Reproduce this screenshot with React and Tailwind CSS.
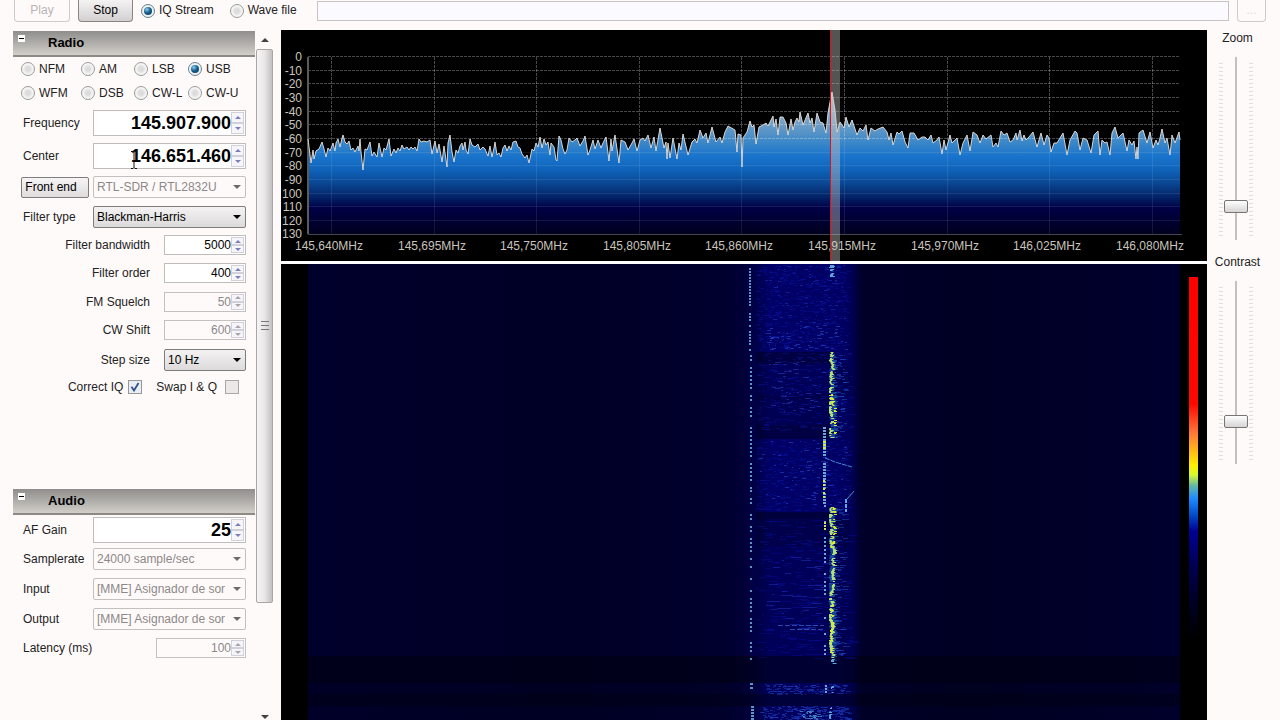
import React from "react";

/* ---------- small controls ---------- */

function Radio({ name, label, checked }) {
  return (
    <label className="flex items-center gap-1 whitespace-nowrap">
      <span className="grid size-[14px] shrink-0 place-items-center">
        <input
          type="radio"
          name={name}
          defaultChecked={checked}
          className="peer col-start-1 row-start-1 size-[14px] appearance-none rounded-full border border-[#9a9a9a] bg-[radial-gradient(circle,#dcdcdc_25%,#f6f6f6_60%)] checked:border-[#6d7f8c] checked:bg-none checked:bg-[#eef3f6]"
        />
        <span className="pointer-events-none col-start-1 row-start-1 hidden size-2 rounded-full bg-[radial-gradient(circle_at_35%_30%,#8fd0ee,#17608f_45%,#0a2f50)] peer-checked:block" />
      </span>
      {label}
    </label>
  );
}

function Triangle({ up, className }) {
  return (
    <svg viewBox="0 0 8 4" className={className} aria-hidden="true">
      <path d={up ? "M4 0 8 4H0z" : "M0 0h8L4 4z"} fill="currentColor" />
    </svg>
  );
}

function NumberField({ id, value, disabled, big }) {
  return (
    <div
      className={
        "flex items-center border p-px " +
        (big ? "h-[26px] w-[153px] bg-white" : "h-5 w-full") +
        (disabled ? " border-[#c4c0c0] text-[#8c8888]" : " border-[#c0bcbc] bg-white text-black")
      }
    >
      <input
        id={id}
        type="text"
        defaultValue={value}
        disabled={disabled}
        className={"min-w-0 flex-1 bg-transparent text-right " + (big ? "text-lg font-bold leading-6" : "text-xs leading-4")}
      />
      <div className={"flex h-full w-[13px] shrink-0 flex-col " + (disabled ? "text-[#a9a4a8]" : "text-[#7a7fba]")}>
        <button type="button" aria-label="Increase" disabled={disabled} className="flex flex-1 items-center justify-center border border-[#d2d0da] bg-[#f6f5fa]">
          <Triangle up className="h-[3px] w-[6px]" />
        </button>
        <button type="button" aria-label="Decrease" disabled={disabled} className="flex flex-1 items-center justify-center border border-[#d2d0da] bg-[#f6f5fa]">
          <Triangle className="h-[3px] w-[6px]" />
        </button>
      </div>
    </div>
  );
}

function Select({ id, value, disabled }) {
  return (
    <div className="relative w-full">
      <select
        id={id}
        disabled={disabled}
        className={
          "block h-[22px] w-full appearance-none overflow-hidden text-clip whitespace-nowrap rounded-xs border pl-[3px] pr-5 text-xs opacity-100 " +
          (disabled
            ? "border-[#c4c0c0] bg-transparent text-[#8c8888]"
            : "border-[#7e7c7c] bg-linear-to-b from-[#f4f2f2] to-[#dcdada] text-black")
        }
      >
        <option>{value}</option>
      </select>
      <Triangle className={"pointer-events-none absolute right-[5px] top-[9px] h-1 w-2 " + (disabled ? "text-[#6e6a6a]" : "text-black")} />
    </div>
  );
}

function Row({ id, label, children, className = "h-[29px]" }) {
  return (
    <div className={"flex items-center justify-between pl-[10px] " + className}>
      <label htmlFor={id} className="whitespace-nowrap">{label}</label>
      <div className="w-[153px]">{children}</div>
    </div>
  );
}

function NarrowRow({ id, label, children, className = "h-[29px]" }) {
  return (
    <div className={"flex items-center justify-end gap-[14px] " + className}>
      <label htmlFor={id} className="whitespace-nowrap">{label}</label>
      <div className="w-[82px]">{children}</div>
    </div>
  );
}

function SectionHeader({ title }) {
  return (
    <h2 className="flex h-[26px] items-start border-b-2 border-[#8d8a86] bg-linear-to-b from-[#8f8e8c] to-[#d2cfc9] text-[13px] font-bold leading-6 text-black">
      <button type="button" aria-label={"Collapse " + title} className="ml-[5px] mt-1 mr-[23px] flex size-[7px] items-center justify-center bg-white">
        <span className="h-px w-[5px] bg-black" />
      </button>
      {title}
    </h2>
  );
}

function Slider({ id, label, value }) {
  const ticks = "mt-[6px] h-[174px] w-1 bg-[repeating-linear-gradient(to_bottom,#e2dede_0_1px,transparent_1px_4px)]";
  return (
    <div className="flex flex-col items-center">
      <label htmlFor={id} className="leading-4">{label}</label>
      <div className="mt-[11px] flex justify-center gap-px pr-1">
        <span className={ticks} />
        <input
          id={id}
          type="range"
          defaultValue={value}
          className="h-[183px] w-6 appearance-none bg-[linear-gradient(#c4c0c0,#c4c0c0)] bg-[length:2px_100%] bg-center bg-no-repeat [direction:rtl] [writing-mode:vertical-lr] [&::-webkit-slider-thumb]:h-[13px] [&::-webkit-slider-thumb]:w-6 [&::-webkit-slider-thumb]:appearance-none [&::-webkit-slider-thumb]:rounded-xs [&::-webkit-slider-thumb]:border [&::-webkit-slider-thumb]:border-[#777474] [&::-webkit-slider-thumb]:bg-linear-to-b [&::-webkit-slider-thumb]:from-white [&::-webkit-slider-thumb]:to-[#d6d4d4]"
        />
        <span className={ticks} />
      </div>
    </div>
  );
}

/* ---------- spectrum ---------- */

const TRACE =
  "308,139 311,163 313,150 314,159 316,151 319,149 322,142 324,149 326,157 328,148 330,151 333,143 335,151 336,143 338,139 340,147 342,138 343,135 345,142 347,144 349,141 351,150 353,148 355,152 358,146 359,151 360,139 361,152 363,170 365,149 367,150 370,142 372,156 374,152 377,157 379,143 382,157 384,148 386,150 389,139 391,156 394,149 396,153 398,148 400,151 402,145 404,149 407,147 409,150 411,147 413,149 415,147 417,151 419,139 421,142 424,141 427,142 430,140 432,154 435,141 437,153 439,144 442,162 444,146 447,167 448,143 450,135 452,152 454,162 456,150 458,153 460,146 462,143 463,150 465,142 466,150 468,154 470,139 472,145 475,147 478,144 480,150 483,147 485,149 488,156 490,146 492,157 494,148 495,142 497,155 499,153 501,157 503,148 505,145 507,151 509,146 511,150 513,142 516,141 518,147 520,148 522,154 525,158 527,155 529,163 532,149 534,151 536,143 538,147 540,137 542,148 544,139 546,145 548,142 550,155 551,143 554,147 556,160 557,161 559,136 561,140 563,149 565,154 567,150 569,138 572,142 575,140 577,138 580,146 583,141 585,136 588,155 590,150 593,140 595,149 598,140 601,148 603,143 606,137 609,161 611,139 612,151 615,135 619,163 621,140 625,142 628,150 632,143 634,139 637,151 640,140 643,138 645,141 648,135 651,148 654,137 656,151 660,128 664,148 666,142 667,159 668,143 670,158 673,138 677,159 679,143 681,150 683,134 688,155 692,142 695,139 697,143 700,130 703,138 706,133 708,143 712,127 716,142 720,137 722,143 725,132 728,126 735,130 737,152 738,134 741,135 742,167 743,138 747,132 750,121 752,127 754,125 756,144 759,127 763,125 766,123 768,126 773,116 774,127 776,119 778,135 780,117 783,117 786,123 788,135 791,119 793,130 795,122 797,118 799,122 800,112 803,125 808,113 810,123 812,118 814,132 817,113 820,122 823,123 826,133 828,113 830,102 832,92 835,110 837,132 840,122 842,125 844,128 846,117 849,127 852,120 857,135 860,128 863,131 866,125 868,140 871,128 875,131 878,129 883,127 887,132 889,140 891,133 893,145 897,132 899,134 902,131 905,142 908,148 910,133 914,133 918,140 922,137 925,137 928,140 931,135 933,143 937,140 939,137 942,154 944,140 946,150 950,135 952,143 957,138 960,155 963,143 967,135 970,151 973,132 977,135 980,143 983,135 986,139 991,135 993,147 996,143 998,147 1001,131 1004,135 1007,133 1010,142 1013,140 1016,133 1017,140 1020,130 1022,141 1024,135 1026,140 1029,137 1033,132 1037,147 1041,133 1044,145 1047,135 1049,138 1051,152 1054,143 1057,143 1060,138 1063,133 1067,155 1070,140 1075,131 1077,133 1080,150 1083,138 1087,140 1091,153 1094,135 1098,131 1100,155 1102,140 1105,143 1107,142 1110,155 1112,133 1115,127 1118,138 1123,133 1127,151 1129,140 1132,145 1134,141 1136,159 1137,147 1138,159 1139,133 1143,130 1147,143 1150,132 1153,148 1156,140 1158,145 1160,138 1162,129 1165,143 1167,138 1170,155 1172,135 1175,143 1179,132 1180,140";

const LEVELS = ["0", "-10", "-20", "-30", "-40", "-50", "-60", "-70", "-80", "-90", "100", "110", "120", "130"];
const FREQS = ["145,640", "145,695", "145,750", "145,805", "145,860", "145,915", "145,970", "146,025", "146,080"];
const levelY = (i) => 56 + Math.round(i * 13.65);
const freqX = (i) => 331 + Math.round(i * 102.6);

function Spectrum() {
  return (
    <svg viewBox="281 30 926 231" className="block h-auto w-full bg-black" role="img" aria-label="Spectrum">
      <defs>
        <linearGradient id="level" gradientUnits="userSpaceOnUse" x1="0" y1="90" x2="0" y2="234">
          <stop offset="0" stopColor="#b4bcc6" />
          <stop offset="0.22" stopColor="#74a0c6" />
          <stop offset="0.36" stopColor="#3c88c8" />
          <stop offset="0.46" stopColor="#1a74cc" />
          <stop offset="0.56" stopColor="#0e62b8" />
          <stop offset="0.65" stopColor="#0a4692" />
          <stop offset="0.74" stopColor="#032468" />
          <stop offset="0.82" stopColor="#000046" />
          <stop offset="1" stopColor="#00001e" />
        </linearGradient>
      </defs>
      <polygon points={"308,234 " + TRACE + " 1180,234"} fill="url(#level)" />
      <g stroke="#fff" strokeOpacity="0.28" strokeDasharray="3 1" shapeRendering="crispEdges">
        {LEVELS.slice(0, 7).map((l, i) => (
          <path key={l} d={`M308 ${levelY(i)}.5H1180`} />
        ))}
        {FREQS.map((f, i) => (
          <path key={f} d={`M${freqX(i)}.5 57V140`} />
        ))}
      </g>
      <g stroke="#fff" strokeOpacity="0.09" shapeRendering="crispEdges">
        {LEVELS.slice(7, 13).map((l, i) => (
          <path key={l} d={`M308 ${levelY(i + 7)}.5H1180`} />
        ))}
        {FREQS.map((f, i) => (
          <path key={f} d={`M${freqX(i)}.5 140V234`} />
        ))}
      </g>
      <path d="M308 57V234" stroke="#5a5a5a" strokeWidth="2" />
      <path d="M308 234.500H1182" stroke="#454550" />
      <polyline points={TRACE} fill="none" stroke="#e4e0dc" strokeOpacity="0.92" strokeWidth="1" />
      <g fontFamily="Liberation Sans, Arial, sans-serif" fontSize="12" fill="#c8c4bc">
        {LEVELS.map((l, i) => (
          <text key={l} x="302" y={levelY(i) + 5} textAnchor="end">{l}</text>
        ))}
        {FREQS.map((f, i) => (
          <text key={f} x={freqX(i) - 2} y="250" textAnchor="middle">{f + "MHz"}</text>
        ))}
      </g>
      <rect x="831" y="30" width="9" height="231" fill="#c8c8c8" fillOpacity="0.42" />
      <rect x="830" y="30" width="1" height="231" fill="#e01414" />
    </svg>
  );
}

/* ---------- waterfall ---------- */

function makeRandom(seed) {
  let s = seed;
  return () => {
    s = (s * 1664525 + 1013904223) % 4294967296;
    return s / 4294967296;
  };
}

const rnd = makeRandom(1459079);

function marks(count, x0, x1, y0, y1, maxLen) {
  let d = "";
  for (let i = 0; i < count; i++) {
    const x = Math.round(x0 + rnd() * (x1 - x0));
    const y = Math.round(y0 + rnd() * (y1 - y0));
    d += `M${x} ${y}.5h${1 + Math.round(rnd() * maxLen)}`;
  }
  return d;
}

/* vertical carrier: short strokes around x, kept with the given probability */
function carrier(x, y0, y1, keep, jitter, minLen, maxLen) {
  let d = "";
  let drift = 0;
  for (let y = y0; y < y1; y++) {
    drift = Math.max(-jitter, Math.min(jitter, drift + (rnd() - 0.5) * 2));
    if (rnd() < keep) d += `M${(x + drift).toFixed(1)} ${y}.5h${minLen + Math.round(rnd() * (maxLen - minLen))}`;
  }
  return d;
}

function dashes(x, y0, y1, every, keep, width) {
  let d = "";
  for (let y = y0; y < y1; y += every) {
    if (rnd() < keep) d += `M${x} ${y}h${width}v2h-${width}z`;
  }
  return d;
}

const NOISE = [
  { d: marks(650, 756, 848, 265, 350, 4), color: "#0a14a0", opacity: 0.4 },
  { d: marks(300, 756, 850, 352, 430, 6), color: "#0a14a0", opacity: 0.4 },
  { d: marks(420, 756, 850, 440, 510, 4), color: "#0a14a8", opacity: 0.4 },
  { d: marks(300, 756, 850, 520, 658, 10), color: "#0810a0", opacity: 0.4 },
  { d: marks(60, 765, 846, 325, 350, 4), color: "#2848c8", opacity: 0.6 },
  { d: marks(60, 765, 846, 265, 325, 3), color: "#2038c0", opacity: 0.5 },
  { d: marks(50, 768, 822, 360, 412, 5), color: "#2c40c0", opacity: 0.55 },
  { d: marks(70, 758, 846, 440, 505, 4), color: "#2444c8", opacity: 0.6 },
  { d: marks(36, 765, 826, 555, 630, 14), color: "#1c30b8", opacity: 0.55 },
  { d: marks(150, 765, 846, 684, 694, 4), color: "#1c38b8", opacity: 0.55 },
  { d: marks(190, 760, 848, 706, 719, 4), color: "#1c40c0", opacity: 0.55 },
  { d: marks(35, 800, 818, 710, 719, 3), color: "#50a0e0", opacity: 0.6 },
  { d: marks(70, 830, 844, 352, 440, 5), color: "#2050b8", opacity: 0.55 },
  { d: marks(130, 828, 844, 507, 660, 6), color: "#2050b8", opacity: 0.5 },
];

const GLOW = carrier(830, 352, 438, 0.8, 1, 4, 8) + carrier(830, 507, 658, 0.8, 1, 4, 8);
const SIGNAL = carrier(831, 352, 438, 0.8, 2, 2, 4) + carrier(831, 507, 658, 0.84, 2, 2, 4);
const HOT = carrier(832, 394, 438, 0.4, 2, 2, 3) + carrier(832, 507, 550, 0.3, 2, 2, 3) + carrier(832, 602, 655, 0.4, 2, 2, 3);
const SIGNAL_ENDS = carrier(831, 264, 277, 0.8, 2, 2, 5) + carrier(832, 658, 664, 0.6, 1, 2, 4) + carrier(831, 684, 693, 0.6, 2, 1, 4) + carrier(831, 707, 720, 0.6, 2, 1, 4);
const LEFT = dashes(749, 265, 350, 3, 0.78, 2) + dashes(750, 355, 490, 4, 0.65, 2) + dashes(750, 490, 660, 4, 0.6, 2) + dashes(750, 683, 690, 4, 1, 3) + dashes(751, 706, 720, 3, 1, 3);
const MIDDLE = dashes(823, 427, 505, 3, 0.8, 3) + dashes(824, 505, 656, 4, 0.65, 2) + dashes(825, 685, 692, 3, 1, 2);
const MIDDLE_HOT = dashes(823, 441, 450, 3, 1, 3) + dashes(823, 480, 500, 4, 0.9, 2) + dashes(824, 522, 530, 3, 1, 2);

/* horizontal fades: [y, height, x, width, opacity] */
const FADES = [
  [352, 12, 756, 76, 0.4],
  [364, 30, 756, 94, 0.15],
  [394, 6, 756, 74, 0.3],
  [400, 25, 756, 74, 0.2],
  [425, 14, 756, 74, 0.4],
  [512, 7, 756, 74, 0.45],
  [519, 27, 756, 94, 0.3],
  [546, 110, 756, 94, 0.15],
  [656, 27, 308, 872, 0.6],
  [683, 11, 308, 872, 0.15],
  [694, 12, 308, 872, 0.5],
  [706, 14, 308, 872, 0.1],
];

function Waterfall() {
  return (
    <svg viewBox="281 264 926 456" preserveAspectRatio="xMidYMin slice" className="block min-h-0 w-full flex-1 bg-black" role="img" aria-label="Waterfall">
      <defs>
        <linearGradient id="band" gradientUnits="userSpaceOnUse" x1="308" y1="0" x2="1180" y2="0">
          <stop offset="0" stopColor="#00002c" />
          <stop offset="0.3" stopColor="#000026" />
          <stop offset="0.48" stopColor="#00002e" />
          <stop offset="0.505" stopColor="#00003c" />
          <stop offset="0.53" stopColor="#000066" />
          <stop offset="0.61" stopColor="#000064" />
          <stop offset="0.622" stopColor="#000058" />
          <stop offset="0.635" stopColor="#00002a" />
          <stop offset="0.75" stopColor="#000024" />
          <stop offset="1" stopColor="#00002e" />
        </linearGradient>
        <linearGradient id="scale" gradientUnits="userSpaceOnUse" x1="0" y1="277" x2="0" y2="640">
          <stop offset="0" stopColor="#ff0000" />
          <stop offset="0.35" stopColor="#ff0800" />
          <stop offset="0.43" stopColor="#ff7838" />
          <stop offset="0.52" stopColor="#fff000" />
          <stop offset="0.545" stopColor="#d8f830" />
          <stop offset="0.575" stopColor="#60b8a8" />
          <stop offset="0.61" stopColor="#1e8cff" />
          <stop offset="0.65" stopColor="#0454d0" />
          <stop offset="0.7" stopColor="#000094" />
          <stop offset="0.8" stopColor="#000050" />
          <stop offset="0.9" stopColor="#000022" />
          <stop offset="1" stopColor="#000000" />
        </linearGradient>
      </defs>
      <rect x="308" y="264" width="872" height="456" fill="url(#band)" />
      {FADES.map(([y, h, x, w, o]) => (
        <rect key={y} x={x} y={y} width={w} height={h} fill="#000010" fillOpacity={o} />
      ))}
      {NOISE.map((n, i) => (
        <path key={i} d={n.d} stroke={n.color} strokeOpacity={n.opacity} />
      ))}
      <path d={GLOW} stroke="#1c60b0" strokeOpacity="0.7" />
      <path d={SIGNAL} stroke="#b4e078" />
      <path d={HOT} stroke="#e0ee28" />
      <path d={SIGNAL_ENDS} stroke="#58a8e0" />
      <path d={LEFT} fill="#68aee8" fillOpacity="0.85" />
      <path d={MIDDLE} fill="#78b8dc" fillOpacity="0.9" />
      <path d={MIDDLE_HOT} fill="#d0f040" />
      <path d="M778 625.500h46M790 629.500h34" stroke="#3c58b8" strokeDasharray="5 2" strokeOpacity="0.8" />
      <path d="M825 458l10 4 17 5" fill="none" stroke="#3c8cd0" strokeDasharray="5 1" />
      <path d="M854 491l-7 8" fill="none" stroke="#4c90c8" />
      <path d="M846 499v13" stroke="#58a8e8" strokeWidth="2" strokeDasharray="4 1" />
      <rect x="1189" y="277" width="9" height="363" fill="url(#scale)" />
    </svg>
  );
}

/* ---------- page ---------- */

function ScrollBar() {
  return (
    <div className="ml-px mr-2 flex w-[17px] shrink-0 flex-col items-center text-[#44403f]">
      <button type="button" aria-label="Scroll up" className="flex h-[19px] w-full shrink-0 items-center justify-center">
        <Triangle up className="h-[4px] w-[8px]" />
      </button>
      <div className="flex w-full grow-[83] flex-col items-center justify-center gap-[3px] rounded-xs border border-[#aaa6a6] bg-linear-to-r from-[#f6f4f4] via-[#e8e6e6] to-[#c4c1c1]">
        <span className="h-px w-2 bg-[#777]" />
        <span className="h-px w-2 bg-[#777]" />
        <span className="h-px w-2 bg-[#777]" />
      </div>
      <div className="w-full grow-[17]" />
      <button type="button" aria-label="Scroll down" className="flex h-[6px] w-full shrink-0 items-center justify-center">
        <Triangle className="h-[4px] w-[8px]" />
      </button>
    </div>
  );
}

function RadioPanel() {
  return (
    <section>
      <SectionHeader title="Radio" />
      <div className="grid grid-cols-[60px_53px_54px_1fr] pb-px pl-2 leading-6">
        <Radio name="mode" label="NFM" />
        <Radio name="mode" label="AM" />
        <Radio name="mode" label="LSB" />
        <Radio name="mode" label="USB" checked />
        <Radio name="mode" label="WFM" />
        <Radio name="mode" label="DSB" />
        <Radio name="mode" label="CW-L" />
        <Radio name="mode" label="CW-U" />
      </div>
      <div className="pr-[9px]">
        <Row id="frequency" label="Frequency" className="h-[33px]">
          <NumberField id="frequency" value="145.907.900" big />
        </Row>
        <div className="relative">
          <Row id="center" label="Center" className="h-[33px]">
            <NumberField id="center" value="146.651.460" big />
          </Row>
          <svg viewBox="0 0 8 18" className="pointer-events-none absolute left-[117px] top-3 h-[18px] w-2" aria-hidden="true">
            <path d="M1 .5h2l1 1 1-1h2M4 1.500v15M1 17.500h2l1-1 1 1h2" fill="none" stroke="#111" />
          </svg>
        </div>
        <div className="flex h-[30px] items-center justify-between pl-2">
          <button type="button" className="h-[21px] w-[68px] rounded-xs border border-[#7e7c7c] bg-linear-to-b from-[#f6f4f4] to-[#dedcdc] pr-2 text-black">
            Front end
          </button>
          <div className="w-[153px]">
            <Select id="device" value="RTL-SDR / RTL2832U" disabled />
          </div>
        </div>
        <Row id="filter" label="Filter type">
          <Select id="filter" value="Blackman-Harris" />
        </Row>
        <NarrowRow id="bandwidth" label="Filter bandwidth" className="h-7">
          <NumberField id="bandwidth" value="5000" />
        </NarrowRow>
        <NarrowRow id="order" label="Filter order" className="h-7">
          <NumberField id="order" value="400" />
        </NarrowRow>
        <NarrowRow id="squelch" label="FM Squelch">
          <NumberField id="squelch" value="50" disabled />
        </NarrowRow>
        <NarrowRow id="shift" label="CW Shift" className="h-7">
          <NumberField id="shift" value="600" disabled />
        </NarrowRow>
        <NarrowRow id="step" label="Step size" className="h-8">
          <Select id="step" value="10 Hz" />
        </NarrowRow>
        <div className="flex h-[22px] items-center justify-end gap-[14px] pr-[7px]">
          <label className="flex items-center gap-[5px]">
            Correct IQ
            <span className="grid size-[14px] place-items-center">
              <input type="checkbox" defaultChecked className="peer col-start-1 row-start-1 size-[14px] appearance-none border border-[#9a9797] bg-[#e8edf4]" />
              <svg viewBox="0 0 10 10" className="pointer-events-none col-start-1 row-start-1 hidden size-[10px] peer-checked:block" aria-hidden="true">
                <path d="M1.500 4.800 4 8.500 8.500 1" fill="none" stroke="#35508c" strokeWidth="1.800" />
              </svg>
            </span>
          </label>
          <label className="flex items-center gap-2">
            Swap I &amp; Q
            <input type="checkbox" className="size-[14px] appearance-none border border-[#aaa6a6] bg-[#ebe8e8]" />
          </label>
        </div>
      </div>
    </section>
  );
}

function AudioPanel() {
  return (
    <section className="mt-[91px]">
      <SectionHeader title="Audio" />
      <div className="pr-[9px]">
        <Row id="gain" label="AF Gain" className="h-[29px]">
          <NumberField id="gain" value="25" big />
        </Row>
        <Row id="samplerate" label="Samplerate" className="h-[30px]">
          <Select id="samplerate" value="24000 sample/sec" disabled />
        </Row>
        <Row id="input" label="Input" className="h-[30px]">
          <Select id="input" value="[MME] Asignador de sonido" disabled />
        </Row>
        <Row id="output" label="Output" className="h-[30px]">
          <Select id="output" value="[MME] Asignador de sonido" disabled />
        </Row>
        <div className="flex h-7 items-center justify-between pl-[10px]">
          <label htmlFor="latency">Latency (ms)</label>
          <div className="w-[90px]">
            <NumberField id="latency" value="100" disabled />
          </div>
        </div>
      </div>
    </section>
  );
}

export default function App() {
  return (
    <div className="flex h-screen flex-col overflow-hidden bg-[#fffafa] font-['Liberation_Sans',Arial,sans-serif] text-xs text-[#222]">
      <header className="flex h-[30px] shrink-0 items-start pl-[14px] pr-[14px] leading-[21px]">
        <button type="button" disabled className="h-[22px] w-14 rounded-b-sm border border-t-0 border-[#cfcbcb] text-[#b8b4b4]">Play</button>
        <button type="button" className="ml-2 h-[22px] w-[55px] rounded-b-sm border border-t-0 border-[#888585] bg-linear-to-b from-[#f4f2f2] to-[#d2d0d0] text-black">Stop</button>
        <div className="ml-2 flex gap-4">
          <Radio name="source" label="IQ Stream" checked />
          <Radio name="source" label="Wave file" />
        </div>
        <input type="text" aria-label="Wave file path" className="ml-5 mt-px h-5 min-w-0 flex-1 border border-[#c8c4c4] bg-[#fbfaff]" />
        <button type="button" className="ml-2 h-[22px] w-[29px] rounded-b-sm border border-t-0 border-[#cfcbcb] text-[#dcd8e0]">...</button>
      </header>
      <main className="flex min-h-0 flex-1">
        <div className="ml-[13px] w-[242px] shrink-0 overflow-hidden pt-px">
          <RadioPanel />
          <AudioPanel />
        </div>
        <ScrollBar />
        <div className="flex min-w-0 flex-1 flex-col gap-[3px] bg-white">
          <Spectrum />
          <Waterfall />
        </div>
        <aside className="flex w-[73px] shrink-0 flex-col gap-[14px] pr-3">
          <Slider id="zoom" label="Zoom" value={16} />
          <Slider id="contrast" label="Contrast" value={21} />
        </aside>
      </main>
    </div>
  );
}
